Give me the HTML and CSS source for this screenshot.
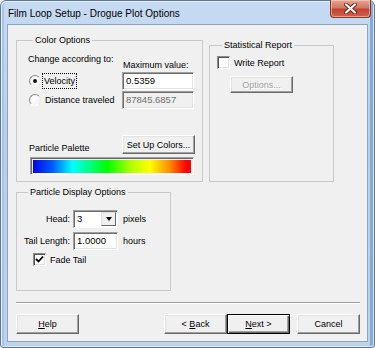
FILE: index.html
```html
<!DOCTYPE html>
<html lang="en">
<head>
    <meta charset="UTF-8">
    <title>Film Loop Setup - Drogue Plot Options</title>
    <link rel="stylesheet" href="styles.css">
</head>
<body>
    <div class="vindue">
        <div class="titel">
            <span class="titelTekst">Film Loop Setup - Drogue Plot Options</span>
            <button class="luk">
                <svg width="13" height="11" viewBox="0 0 13 11">
                    <path d="M2 1.5 L11 9.5 M11 1.5 L2 9.5" stroke="#6b2418" stroke-width="4" stroke-linecap="round"/>
                    <path d="M2 1.5 L11 9.5 M11 1.5 L2 9.5" stroke="#fff" stroke-width="2.2" stroke-linecap="round"/>
                </svg>
            </button>
        </div>
        <div class="klient">
            <div class="top">
                <fieldset class="gruppe farver">
                    <legend>Color Options</legend>
                    <div class="farveGrid">
                        <span class="ovre">Change according to:</span>
                        <span class="maks">Maximum value:</span>
                        <label class="valg"><span class="radio tjek"></span><span class="fokus">Velocity</span></label>
                        <span class="felt">0.5359</span>
                        <label class="valg"><span class="radio"></span><span class="tekst">Distance traveled</span></label>
                        <span class="felt slukket">87845.6857</span>
                    </div>
                    <div class="paletRaekke">
                        <span class="paletNavn">Particle Palette</span>
                        <button class="knap farveKnap">Set Up Colors...</button>
                    </div>
                    <div class="palet"><div class="regnbue"></div></div>
                </fieldset>
                <fieldset class="gruppe statistik">
                    <legend>Statistical Report</legend>
                    <label class="valg"><span class="boks"></span><span class="tekst">Write Report</span></label>
                    <button class="knap slukketKnap">Options...</button>
                </fieldset>
            </div>
            <fieldset class="gruppe partikler">
                <legend>Particle Display Options</legend>
                <div class="partikelGrid">
                    <span class="etiket">Head:</span>
                    <span class="combo"><span class="comboVaerdi">3</span><span class="comboPil"></span></span>
                    <span>pixels</span>
                    <span class="etiket">Tail Length:</span>
                    <span class="felt">1.0000</span>
                    <span>hours</span>
                </div>
                <label class="valg fade"><span class="boks tjek">
                    <svg width="9" height="9" viewBox="0 0 9 9"><path d="M1 4 L3.5 6.5 L8 1.5" stroke="#000" stroke-width="1.8" fill="none"/></svg>
                </span><span class="tekst">Fade Tail</span></label>
            </fieldset>
            <div class="skille"></div>
            <div class="knapper">
                <button class="knap"><u>H</u>elp</button>
                <button class="knap tilbage">&lt; <u>B</u>ack</button>
                <button class="knap standard"><u>N</u>ext &gt;</button>
                <button class="knap annuller">Cancel</button>
            </div>
        </div>
    </div>
</body>
</html>
```
FILE: styles.css
```css
body {
    margin: 0;
    background: #fff;
    font-family: "Liberation Sans", Arial, sans-serif;
    font-size: 9px;
    line-height: 12px;
    color: #000;
}

.vindue {
    width: 375px;
    height: 348px;
    box-sizing: border-box;
    border: 1px solid #5f7896;
    border-radius: 6px 6px 3px 3px;
    padding: 0 6px 6px 6px;
    background: linear-gradient(#c6dbf2, #b9d0ea 40%, #bcd3ec);
    box-shadow: inset 1px 1px 0 #e3eefa, inset -1px -1px 0 #dbe7f5, inset 3px 0 0 #a9c4e6, inset -4px 0 0 #86aad8;
}

.titel {
    display: flex;
    height: 23px;
    align-items: center;
}
.titelTekst {
    font-size: 10px;
    padding-left: 1px;
    padding-top: 2px;
    flex: 1;
}
.luk {
    align-self: flex-start;
    width: 41px;
    height: 18px;
    margin: -1px -3px 0 0;
    padding: 0;
    border: 1px solid #84352a;
    border-top: none;
    border-radius: 0 0 4px 4px;
    background: linear-gradient(#e6a797, #d37563 45%, #c2432f 55%, #d0634d);
    box-shadow: inset 0 0 0 1px rgba(255, 220, 210, 0.5);
    display: flex;
    align-items: center;
    justify-content: center;
}

.klient {
    height: 318px;
    box-sizing: border-box;
    border: 1px solid #8fa3bd;
    background: #f0f0f0;
    display: flex;
    flex-direction: column;
}

.top {
    display: flex;
    align-items: stretch;
    margin-left: 8px;
}

.gruppe {
    margin: 0;
    padding: 0;
    border: 1px solid #c8c8c8;
    box-sizing: border-box;
    min-width: 0;
}
.gruppe legend {
    margin-left: 5px;
    padding: 0 2px;
    line-height: 12px;
}

.farver {
    width: 187px;
    margin-top: 9px;
    padding: 7px 0 6px 11px;
}
.farveGrid {
    display: grid;
    grid-template-columns: 94px 72px;
    grid-template-rows: 18px 18px 18px;
    row-gap: 1px;
}
.ovre {
    align-self: start;
    margin-top: 0;
}
.maks {
    align-self: end;
    margin-left: 1px;
}
.valg {
    display: flex;
    align-items: center;
    gap: 3px;
}
.farveGrid .valg {
    padding-left: 1px;
}
.radio {
    width: 12px;
    height: 12px;
    box-sizing: border-box;
    border-radius: 50%;
    border: 1px solid;
    border-color: #8a8a8a #e8e8e8 #ffffff #8a8a8a;
    background: radial-gradient(circle at 40% 40%, #fff, #f0f0f0);
    display: flex;
    align-items: center;
    justify-content: center;
}
.radio.tjek::after {
    content: "";
    width: 4px;
    height: 4px;
    border-radius: 50%;
    background: #111;
}
.fokus {
    outline: 1px dotted #000;
    padding: 1px 1px;
    margin-left: -1px;
}
.tekst {
    padding: 0 1px;
}

.felt {
    display: flex;
    align-items: center;
    height: 18px;
    box-sizing: border-box;
    padding-left: 3px;
    background: #fff;
    border: 1px solid;
    border-color: #a0a0a0 #ffffff #ffffff #a0a0a0;
    box-shadow: inset 1px 1px 0 #6e6e6e, inset -1px -1px 0 #e3e3e3;
    font-size: 9.5px;
}
.felt.slukket {
    background: #f0f0f0;
    color: #6d6d6d;
}

.paletRaekke {
    display: grid;
    grid-template-columns: 94px 72px;
    height: 19px;
    margin-top: 26px;
}
.paletNavn {
    align-self: end;
    padding-left: 1px;
}
.farveKnap {
    width: 73px;
}
.palet {
    margin: 3px 0 0 2px;
    width: 164px;
    height: 18px;
    box-sizing: border-box;
    border: 1px solid;
    border-color: #a0a0a0 #ffffff #ffffff #a0a0a0;
    box-shadow: inset 1px 1px 0 #696969;
    padding: 2px 2px 1px 2px;
}
.regnbue {
    height: 100%;
    background: linear-gradient(to right, #0008e8 0%, #0058ff 12%, #00ffff 25%, #00ff80 36%, #00ff00 47%, #b0ff00 62%, #ffff00 74%, #ff9000 86%, #ff0000 97%);
}

.knap {
    height: 19px;
    box-sizing: border-box;
    padding: 0;
    font: inherit;
    color: #000;
    background: #f0f0f0;
    border: 1px solid;
    border-color: #ffffff #696969 #696969 #ffffff;
    box-shadow: inset -1px -1px 0 #a0a0a0, inset 1px 1px 0 #e3e3e3;
}

.statistik {
    width: 125px;
    margin: 14px 0 0 6px;
    padding: 5px 0 0 7px;
}
.statistik .valg {
    height: 13px;
}
.boks {
    width: 13px;
    height: 13px;
    box-sizing: border-box;
    background: #fff;
    border: 1px solid;
    border-color: #8a8a8a #ffffff #ffffff #8a8a8a;
    box-shadow: inset 1px 1px 0 #555, inset -1px -1px 0 #e0e0e0;
    display: flex;
    align-items: center;
    justify-content: center;
}
.slukketKnap {
    display: block;
    width: 63px;
    height: 17px;
    margin: 7px 0 0 13px;
    color: #a0a0a0;
    text-shadow: 1px 1px 0 #fff;
}

.partikler {
    width: 155px;
    margin: 4px 0 0 8px;
    padding: 12px 0 24px 6px;
}
.partikelGrid {
    display: grid;
    grid-template-columns: 47px 45px auto;
    grid-template-rows: 18px 18px;
    column-gap: 3px;
    row-gap: 4px;
    align-items: center;
}
.partikelGrid > span:nth-child(3n) {
    margin-left: 2px;
}
.etiket {
    text-align: right;
}
.combo {
    display: flex;
    height: 18px;
    box-sizing: border-box;
    background: #fff;
    border: 1px solid;
    border-color: #a0a0a0 #ffffff #ffffff #a0a0a0;
    box-shadow: inset 1px 1px 0 #6e6e6e;
    padding: 1px 1px 1px 1px;
}
.comboVaerdi {
    flex: 1;
    padding-left: 2px;
    font-size: 9.5px;
    line-height: 14px;
}
.comboPil {
    width: 15px;
    box-sizing: border-box;
    background: #f0f0f0;
    border: 1px solid;
    border-color: #e3e3e3 #696969 #696969 #e3e3e3;
    display: flex;
    align-items: center;
    justify-content: center;
}
.comboPil::after {
    content: "";
    border-left: 3.5px solid transparent;
    border-right: 3.5px solid transparent;
    border-top: 4px solid #000;
}
.fade {
    margin: 3px 0 0 10px;
    height: 13px;
}

.skille {
    margin: 11px 7px 0 8px;
    height: 1px;
    background: #a0a0a0;
    border-bottom: 1px solid #fff;
}

.knapper {
    display: flex;
    margin: 10px 7px 0 8px;
}
.knapper .knap {
    width: 63px;
    height: 20px;
}
.tilbage {
    margin-left: auto;
}
.knapper .standard {
    border-color: #000;
    box-shadow: inset 1px 1px 0 #fff, inset -1px -1px 0 #696969, inset -2px -2px 0 #a0a0a0;
}
.annuller {
    margin-left: 7px;
}
```
